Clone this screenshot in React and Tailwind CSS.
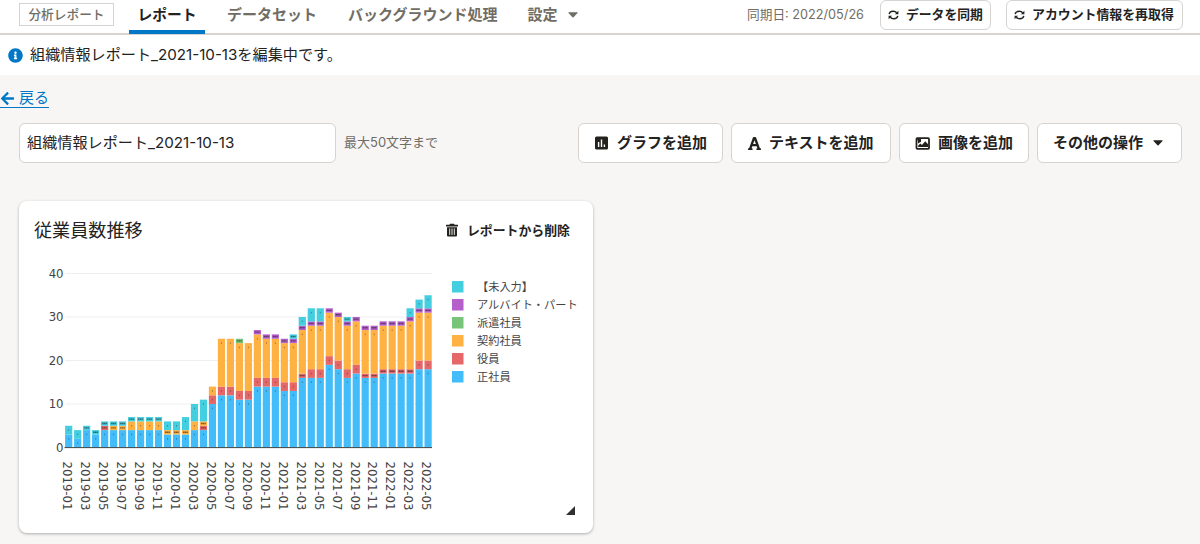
import { FaInfoCircle, FaArrowLeft, FaFont } from 'react-icons/fa';

const SERIES = [
  { name: '正社員', color: '#42bdfa' },
  { name: '役員', color: '#e66767' },
  { name: '契約社員', color: '#ffb142' },
  { name: '派遣社員', color: '#78c57a' },
  { name: 'アルバイト・パート', color: '#b55fcb' },
  { name: '【未入力】', color: '#43cfdf' },
];

// one row per month from 2019-01, values in SERIES order
const DATA = [
  [3, 0, 0, 0, 0, 2],
  [2, 0, 0, 0, 0, 2],
  [4, 0, 0, 0, 0, 1],
  [3, 0, 0, 0, 0, 1],
  [4, 1, 0, 0, 0, 1],
  [4, 0, 1, 0, 0, 1],
  [4, 0, 1, 0, 0, 1],
  [4, 0, 2, 0, 0, 1],
  [4, 0, 2, 0, 0, 1],
  [4, 0, 2, 0, 0, 1],
  [4, 0, 2, 0, 0, 1],
  [3, 0, 1, 0, 0, 2],
  [3, 0, 1, 0, 0, 2],
  [3, 0, 1, 0, 0, 3],
  [4, 0, 2, 0, 0, 4],
  [4, 1, 1, 0, 0, 5],
  [10, 2, 2, 0, 0, 0],
  [12, 2, 11, 0, 0, 0],
  [12, 2, 11, 0, 0, 0],
  [11, 2, 11, 1, 0, 0],
  [11, 2, 11, 0, 0, 0],
  [14, 2, 10, 0, 1, 0],
  [14, 2, 9, 0, 1, 0],
  [14, 2, 9, 0, 1, 0],
  [13, 2, 9, 0, 1, 0],
  [13, 2, 9, 0, 1, 1],
  [16, 1, 10, 0, 1, 2],
  [16, 2, 10, 0, 1, 3],
  [16, 2, 10, 0, 1, 3],
  [19, 2, 10, 0, 1, 0],
  [18, 2, 10, 0, 1, 0],
  [16, 2, 10, 0, 1, 1],
  [17, 2, 10, 0, 1, 0],
  [16, 1, 10, 0, 1, 0],
  [16, 1, 10, 0, 1, 0],
  [17, 1, 10, 0, 1, 0],
  [17, 1, 10, 0, 1, 0],
  [17, 1, 10, 0, 1, 0],
  [17, 1, 11, 0, 1, 2],
  [18, 2, 11, 0, 1, 2],
  [18, 2, 11, 0, 1, 3],
];

const BASE = 187.5;
const UNIT = 4.35;
const STEP = 8.985;

function monthLabel(i) {
  const year = 2019 + Math.floor(i / 12);
  return `${year}-${String((i % 12) + 1).padStart(2, '0')}`;
}

function Bar({ values, x }) {
  let sum = 0;
  return values.map((v, i) => {
    if (!v) return null;
    sum += v;
    const y = BASE - sum * UNIT;
    return (
      <g key={i}>
        <rect x={x} y={y} width="7.2" height={v * UNIT} fill={SERIES[i].color} />
        {v === 1 ? (
          <path d={`M${x + 1.1} ${y + 2.1}h5`} stroke="#222" strokeOpacity="0.6" strokeWidth="1.4" strokeDasharray="1.4 0.3" />
        ) : (
          <rect x={x + 3.1} y={y + 3.6} width="1" height="1.5" fill="#222" fillOpacity="0.4" />
        )}
      </g>
    );
  });
}

function Chart() {
  return (
    <svg className="block" width="574" height="272" viewBox="0 0 574 272">
      <g fontFamily="DejaVu Sans, sans-serif" fontSize="11.7" fill="#444">
        {[0, 10, 20, 30, 40].map(n => (
          <g key={n}>
            {n > 0 && <path d={`M46 ${BASE - n * UNIT}H413`} stroke="#eee" />}
            <text x="44.5" y={BASE - n * UNIT + 4.4} textAnchor="end">{n}</text>
          </g>
        ))}
        {DATA.map((_, i) => i % 2 === 0 && (
          <text key={i} transform={`translate(${44 + i * STEP} 201.5) rotate(90)`} textLength="49">{monthLabel(i)}</text>
        ))}
      </g>
      {DATA.map((values, i) => <Bar key={i} values={values} x={46.1 + i * STEP} />)}
      <path d={`M45.5 ${BASE + 0.1}H413`} stroke="#444" />
      <g fontFamily="Noto Sans CJK JP, sans-serif" fontSize="11.2" fill="#444">
        {[...SERIES].reverse().map((s, i) => (
          <g key={s.name}>
            <rect x="433" y={21 + i * 18} width="11.5" height="11.5" fill={s.color} />
            <text x="458" y={30.7 + i * 18}>{s.name}</text>
          </g>
        ))}
      </g>
    </svg>
  );
}

function SyncIcon() {
  return (
    <svg className="h-[10px] w-[11px] shrink-0" viewBox="0 0 11 10" fill="none" stroke="currentColor" strokeWidth="1.4">
      <path d="M1.2 4.2C1.5 2.3 3.2 1.3 5.2 1.3c1.6 0 2.7.5 3.5 1.5M9.8 5.8C9.5 7.7 7.8 8.7 5.8 8.7c-1.6 0-2.7-.5-3.5-1.5" />
      <path d="M10.4.8v3.5H6.9zM.6 9.2V5.7h3.5z" fill="currentColor" stroke="none" />
    </svg>
  );
}

function ChartIcon() {
  return (
    <svg className="h-[14px] w-[13px] shrink-0" viewBox="0 0 13 14">
      <rect x="0" y="0.5" width="13" height="13" rx="1.5" fill="currentColor" />
      <path d="M3.6 6v5M6.5 3.5V11M9.4 8.5V11" stroke="#fff" strokeWidth="1.4" />
    </svg>
  );
}

function ImageIcon() {
  return (
    <svg className="h-[13px] w-[15px] shrink-0" viewBox="0 0 15 13">
      <rect x="1.5" y="1.2" width="12.5" height="10.6" rx="0.8" fill="none" stroke="currentColor" strokeWidth="1.8" />
      <path d="M2 2h4v2.8L3 6.4v-2zM3.2 10V8.6l2.2-2.2 1.5 1.5 3.4-3.7L13 7.2V10z" fill="currentColor" />
    </svg>
  );
}

function TrashIcon() {
  return (
    <svg className="h-[14px] w-[12px] shrink-0" viewBox="0 0 12 14">
      <path d="M4 0.8h4l.6 1H12v1.7H0V1.8h3.4z" fill="currentColor" />
      <path d="M1 4.2h10v8.3a1 1 0 0 1-1 1H2a1 1 0 0 1-1-1z" fill="currentColor" />
      <path d="M3.7 5.5v6.4M6 5.5v6.4M8.3 5.5v6.4" stroke="#fff" strokeWidth="0.9" />
    </svg>
  );
}

function Caret() {
  return (
    <svg className="h-[6px] w-[10px] shrink-0" viewBox="0 0 10 6">
      <path d="M.8.3h8.4q.8 0 .3.6L5.5 5.3q-.5.5-1 0L.5.9Q0 .3.8.3z" fill="currentColor" />
    </svg>
  );
}

function ToolButton({ className, children }) {
  return (
    <button type="button" className={`flex h-10 items-center rounded-md border border-[#d6d3d0] bg-white text-[15px] font-bold ${className}`}>
      {children}
    </button>
  );
}

export default function App() {
  return (
    <div className="h-[544px] w-[1200px] overflow-hidden bg-[#f7f6f5] font-['Inter','Noto_Sans_CJK_JP',sans-serif] whitespace-nowrap text-[#23221e]">
      <header className="flex h-[35px] items-start border-b-2 border-[#d6d3d0] bg-white pl-[19px]">
        <span className="mt-[3px] flex h-[23px] w-[95px] items-center justify-center border border-[#d6d3d0] text-[12.7px] font-medium text-[#706d65]">分析レポート</span>
        <nav className="flex h-[33px] text-[15px] font-bold text-[#706d65]">
          <a className="ml-[15px] flex h-[34px] w-[76px] items-center justify-center border-b-4 border-[#0077c7] pt-px text-[14.8px] text-[#23221e]">レポート</a>
          <a className="ml-[22px] flex h-[30px] items-center">データセット</a>
          <a className="ml-[31px] flex h-[30px] items-center">バックグラウンド処理</a>
          <a className="ml-[30px] flex h-[30px] items-center gap-[11px]">設定<Caret /></a>
        </nav>
        <div className="mr-[17px] ml-auto flex items-start">
          <span className="mr-[16px] flex h-[30px] items-center text-[12.7px] text-[#706d65]">同期日: 2022/05/26</span>
          <button type="button" className="mr-[15px] flex h-[30px] w-[111px] items-center gap-[7px] rounded-md border border-[#d6d3d0] pl-[7px] text-[12.8px] font-bold">
            <SyncIcon />データを同期
          </button>
          <button type="button" className="flex h-[30px] w-[177px] items-center gap-[7px] rounded-md border border-[#d6d3d0] pl-[7px] text-[12.9px] font-bold">
            <SyncIcon />アカウント情報を再取得
          </button>
        </div>
      </header>

      <div className="flex h-10 items-center gap-[7px] bg-white pl-2 text-[15.15px]">
        <FaInfoCircle className="size-[15px] text-[#0077c7]" />
        <span>組織情報レポート_2021-10-13を編集中です。</span>
      </div>

      <div className="flex h-[49px] items-start pt-[13px]">
        <a className="flex h-[20px] items-center gap-[4px] border-b border-[#0077c7] pt-[2px] text-[15px] text-[#0077c7]">
          <FaArrowLeft className="size-[15px]" />戻る
        </a>
      </div>

      <div className="flex h-[38px] items-center pr-[18px] pl-[19px]">
        <div className="flex h-10 w-[317px] items-center rounded-md border border-[#d6d3d0] bg-white pl-[7px] text-[15.15px]">組織情報レポート_2021-10-13</div>
        <span className="ml-2 text-[13px] text-[#706d65]">最大50文字まで</span>
        <div className="ml-auto flex gap-2">
          <ToolButton className="w-[145px] gap-[9px] pl-[16px]"><ChartIcon />グラフを追加</ToolButton>
          <ToolButton className="w-[160px] gap-[7px] pl-[15px]"><FaFont className="size-[15px]" />テキストを追加</ToolButton>
          <ToolButton className="w-[130px] gap-[8px] pl-[15px]"><ImageIcon />画像を追加</ToolButton>
          <ToolButton className="w-[145px] gap-[10px] pl-[15px]">その他の操作<Caret /></ToolButton>
        </div>
      </div>

      <main className="mt-[39px] ml-[19px] flex h-[332px] w-[574px] flex-col rounded-lg bg-white shadow-[0_1px_3px_rgba(3,3,2,0.3)]">
        <div className="flex h-[59px] items-center justify-between pr-[23px] pl-[15px]">
          <h2 className="text-[18.1px]">従業員数推移</h2>
          <button type="button" className="flex items-center gap-[9px] text-[12.9px] font-bold"><TrashIcon />レポートから削除</button>
        </div>
        <div className="relative h-[272px]">
          <Chart />
          <svg className="absolute top-[246px] left-[547px] size-[9px]" viewBox="0 0 9 9">
            <path d="M9 0v9H0z" fill="#30302e" />
          </svg>
        </div>
      </main>
    </div>
  );
}
